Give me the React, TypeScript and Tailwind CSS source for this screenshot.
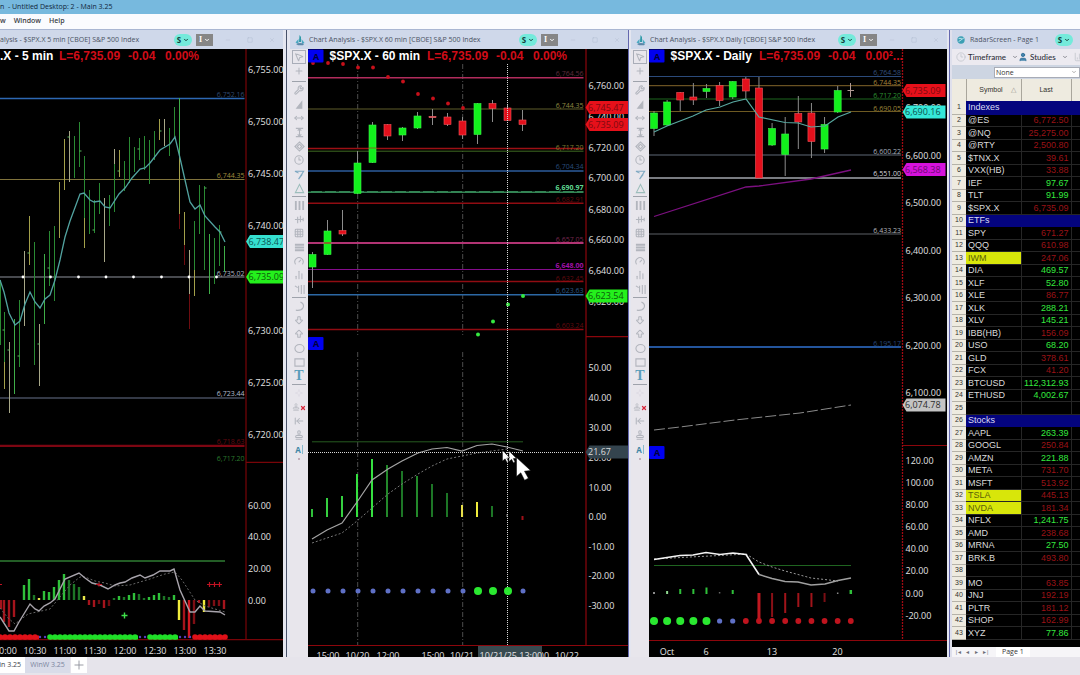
import React from "react";
import {
  MousePointer2, Plus, Wrench, Triangle, MoveHorizontal, Layers, Clock3, PenLine, AlignJustify,
  Grid3x3, Menu, Gauge, BarChart3, Circle, Square, Type, Sparkle, ArrowLeftToLine, Stamp,
  Minus, X, ChevronDown, TextCursor, Redo, ArrowBigDown, ArrowBigUp, User, Activity, TriangleRight, ChartNoAxesColumn, MoveVertical,
} from "lucide-react";

type Pt = [number, number];
type Level = { y: number; color: string; w?: number; label?: string; ly?: number; lc?: string; bold?: boolean; dash?: string };
type Candle = { x: number; top: number; bottom: number; hi: number; lo: number; up: boolean };
type Bar = [number, number, number, string];

const GREEN = "#12f01c";
const RED = "#e3101c";
const BLUE = "#5f70c6";
const poly = (pts: Pt[]) => pts.map((p) => p.join(",")).join(" ");

function AxisText({ x, labels }: { x: number; labels: [string, number][] }) {
  return (
    <g className="fill-[#e2e2e2] text-[9px]">
      {labels.map(([t, y]) => (
        <text key={t + y} x={x} y={y + 3}>{t}</text>
      ))}
    </g>
  );
}

function TimeText({ y, labels }: { y: number; labels: [string, number][] }) {
  return (
    <g className="fill-[#e2e2e2] text-[9px]" textAnchor="middle">
      {labels.map(([t, x]) => (
        <text key={t + x} x={x} y={y}>{t}</text>
      ))}
    </g>
  );
}

function Levels({ x1, x2, items }: { x1: number; x2: number; items: Level[] }) {
  return (
    <g className="text-[7px]" textAnchor="end">
      {items.map((l) => (
        <g key={l.y}>
          <line x1={x1} x2={x2} y1={l.y} y2={l.y} stroke={l.color} strokeWidth={l.w ?? 1} strokeDasharray={l.dash} />
          {l.label && (
            <text x={x2} y={l.ly} fill={l.lc ?? l.color} fontWeight={l.bold ? 700 : 400}>{l.label}</text>
          )}
        </g>
      ))}
    </g>
  );
}

function Tag({ x, y, w, fill, color, text }: { x: number; y: number; w: number; fill: string; color: string; text: string }) {
  return (
    <g>
      <path d={`M${x} ${y} l4 -6.5 h${w - 4} v13 h${4 - w} z`} fill={fill} />
      <text x={x + 2.5} y={y + 3} fill={color} className="text-[9px]">{text}</text>
    </g>
  );
}

function Candles({ items }: { items: Candle[] }) {
  return (
    <g>
      {items.map((c) => (
        <g key={c.x}>
          <line x1={c.x} x2={c.x} y1={c.hi} y2={c.lo} stroke="#8c8c8c" />
          <rect x={c.x - 3.5} y={c.top} width={7} height={c.bottom - c.top} fill={c.up ? GREEN : RED} stroke={c.up ? "#3cf04a" : "#f0555c"} strokeWidth={0.6} />
        </g>
      ))}
    </g>
  );
}

function Bars({ items, w = 1 }: { items: Bar[]; w?: number }) {
  return (
    <g>
      {items.map(([x, a, b, c], i) => (
        <line key={i} x1={x} x2={x} y1={a} y2={b} stroke={c} strokeWidth={w} />
      ))}
    </g>
  );
}

function ABadge({ x, y }: { x: number; y: number }) {
  return (
    <g>
      <rect x={x} y={y} width={15.5} height={13} rx={1} fill="#0000f0" />
      <text x={x + 8} y={y + 10} textAnchor="middle" className="fill-[#00003c] font-bold text-[9px]">A</text>
    </g>
  );
}

function Heading({ x, name, l, chg, pct }: { x: [number, number, number, number]; name: string; l: string; chg: string; pct: string }) {
  return (
    <g className="font-['Liberation_Sans',sans-serif] text-[12px] font-bold">
      <text x={x[0]} y={60} fill="#ffffff">{name}</text>
      <g fill="#d00c18">
        <text x={x[1]} y={60}>{l}</text>
        <text x={x[2]} y={60}>{chg}</text>
        <text x={x[3]} y={60}>{pct}</text>
      </g>
    </g>
  );
}

const G = "#2a8a33";
const YL = "#a3a04a";
const WY = "#a8a888";
const DR = "#6e0c10";

const priceBars: Bar[] = [
  [0.5, 280, 345, G], [4.5, 312, 362, G], [4.5, 362, 389, YL], [9.5, 342, 413, WY], [14.5, 319, 394, "#3fae48"], [19.5, 300, 367, G],
  [24.5, 251, 326, WY], [29.5, 216, 265, YL], [34.5, 242, 365, G], [39.5, 324, 386, WY], [44.5, 254, 324, "#3fae48"],
  [49.5, 231, 286, G], [54.5, 226, 301, G], [59.5, 182, 238, YL], [64.5, 139, 190, YL], [69.5, 131, 182, WY],
  [74.5, 136, 178, G], [79.5, 122, 167, G], [84.5, 156, 218, G], [84.5, 218, 248, YL], [89.5, 190, 234, G], [94.5, 200, 233, G],
  [99.5, 183, 214, G], [104.5, 198, 262, WY], [109.5, 195, 226, G], [114.5, 149, 212, G], [114.5, 149, 164, WY], [119.5, 150, 177, YL],
  [124.5, 161, 191, G], [129.5, 137, 183, G], [134.5, 147, 172, G], [139.5, 138, 160, G], [144.5, 136, 170, G], [149.5, 140, 184, G],
  [154.5, 131, 160, G], [159.5, 119, 140, YL], [164.5, 119, 146, WY], [169.5, 128, 156, G], [174.5, 107, 138, G], [179.5, 98, 155, "#3fae48"],
  [179.5, 155, 214, YL], [179.5, 214, 229, DR], [184.5, 212, 247, YL], [184.5, 245, 265, DR], [189.5, 250, 294, WY], [189.5, 294, 329, DR],
  [194.5, 221, 296, YL], [194.5, 221, 270, G], [199.5, 185, 234, G], [204.5, 186, 270, G], [209.5, 234, 294, "#3fae48"], [214.5, 238, 284, G],
  [219.5, 225, 266, G], [224.5, 246, 272, "#3fae48"],
];

const HG = "#2fc03a";
const HD = "#1d7626";
const HR = "#a5141c";
const hist5: Bar[] = (
  [
    [1, 609, HR], [4, 622, HR], [9, 627, HR], [14, 617, HR], [24, 585, HG], [29, 579, HG], [34, 595, HD], [39, 598, "#e8e84a"], [44, 591, HG],
    [49, 592, HG], [54, 587, HG], [59, 580, HG], [64, 574, HG], [69, 580, HD], [74, 584, HD], [79, 587, HD], [84, 596, "#e8e84a"], [89, 605, HR],
    [94, 607, HR], [99, 604, "#6e0c10"], [104, 608, HR], [109, 606, "#6e0c10"], [114, 598, HD], [119, 596, HG], [124, 597, HD], [129, 595, HG],
    [134, 593, HG], [139, 594, HD], [144, 598, HD], [149, 597, HG], [154, 595, HG], [159, 593, HG], [164, 596, HD], [169, 597, HD],
    [174, 595, HG], [179, 620, "#f0ec3c"], [184, 630, HR], [189, 638, "#d01820"], [194, 624, "#7e0e14"], [199, 603, HR], [204, 612, "#f0ec3c"],
    [209, 607, "#7e0e14"], [214, 606, "#7e0e14"], [219, 606, "#7e0e14"], [224, 609, HR],
  ] as [number, number, string][]
).map(([x, y, c]) => [x, 600, y, c]);

const ribbon = Array.from({ length: 46 }, (_, i) => {
  const x = i * 5;
  const purple = (x > 38 && x < 48) || (x > 139 && x < 149) || (x > 179 && x < 194);
  const green = (x >= 48 && x <= 139) || (x >= 149 && x <= 179);
  return { x, r: purple ? 1.2 : 2.8, c: purple ? "#5b3fc0" : green ? "#1fe028" : "#e01018" };
});

function FiveMinuteChart() {
  return (
    <svg viewBox="0 49 283 608" role="img" aria-label="5 minute chart" className="block h-auto w-full bg-black font-['Open_Sans',sans-serif]">
      <Levels x1={0} x2={244.5} items={[
        { y: 98.5, color: "#2d68b2", w: 1.6, label: "6,752.16", ly: 97, lc: "#31486e" },
        { y: 179.5, color: "#80733c", label: "6,744.35", ly: 178, lc: "#a08c3e" },
        { y: 277, color: "#8e929c", w: 1.2, label: "6,735.02", ly: 276, lc: "#aeb2c0" },
        { y: 398, color: "#69738c", w: 1.2, label: "6,723.44", ly: 396, lc: "#b4bacc" },
        { y: 445.8, color: "#7c0612", w: 2.2, label: "6,718.63", ly: 444, lc: "#640810" },
      ]} />
      <text x={244.5} y={461} textAnchor="end" className="fill-[#2b7a2e] text-[7px]">6,717.20</text>
      <path d="M246 49V640 M246 462.3H283 M0 639.6H283" stroke="#780408" strokeWidth={1.2} fill="none" />
      <Bars items={priceBars} />
      <path d="M4.5 330h-2 M9.5 350h-2 M19.5 356h-2 M29.5 253h-2 M39.5 344h-2 M49.5 268h-2 M79.5 151h2 M94.5 230h-2 M69.5 137h-2 M119.5 171h-2 M139.5 149h-2 M159.5 131h2 M204.5 188h2 M219.5 232h2" stroke="#57b85e" />
      <polyline fill="none" stroke="#52a3a0" strokeWidth={1.3} points={poly([
        [0, 280], [4, 292], [9, 313], [15, 325], [20, 321], [25, 304], [30, 292], [35, 302], [40, 308], [45, 299], [50, 295], [55, 280], [60, 260], [65, 237],
        [70, 221], [80, 194], [84, 193], [90, 200], [94, 202], [100, 201], [105, 207], [110, 208], [119, 194], [125, 188], [132, 178], [140, 169], [145, 168],
        [150, 163], [160, 150], [170, 144], [175, 137], [180, 158], [185, 180], [190, 202], [195, 209], [200, 205], [205, 216], [215, 227], [220, 232], [225, 242],
      ])} />
      {[23, 50.5, 78.5, 106, 133.5, 161.5, 189, 216.5].map((x) => <circle key={x} cx={x} cy={277} r={1.4} fill="#ffffff" />)}
      <line x1={0} x2={225} y1={561} y2={561} stroke="#2f7d33" strokeWidth={1.4} />
      <Bars items={hist5} w={2.4} />
      <polyline fill="none" stroke="#666" strokeDasharray="2 2" points={poly([
        [0, 608], [8, 618], [15, 624], [28, 614], [50, 609], [60, 597], [70, 585], [80, 577], [85, 577], [95, 581], [105, 583], [115, 586], [130, 585],
        [150, 579], [165, 574], [175, 572], [182, 580], [195, 600], [205, 606], [225, 612],
      ])} />
      <polyline fill="none" stroke="#a8a4ac" strokeWidth={1.4} points={poly([
        [0, 617], [9, 631], [14, 631], [19, 622], [30, 604], [35, 609], [39, 611], [44, 606], [50, 603], [55, 599], [65, 579], [79, 573], [85, 578], [92, 583],
        [100, 585], [108, 589], [115, 585], [120, 583], [125, 582], [132, 578], [140, 575], [145, 578], [153, 575], [160, 571], [170, 571], [174, 569],
        [180, 590], [190, 612], [195, 612], [200, 606], [205, 611], [220, 612], [225, 615],
      ])} />
      <path d="M0 584.5h2 M96 584.5h6 M99 582.5v4 M207 584.5h15 M209.5 582v5 M214.5 582v5 M219.5 582v5" stroke="#c01222" strokeWidth={1.2} />
      <path d="M121.5 615.5h6 M124.5 612.5v6" stroke="#3fe04a" strokeWidth={1.4} />
      {ribbon.map((d) => <circle key={d.x} cx={d.x} cy={637} r={d.r} fill={d.c} />)}
      <rect x={0} y={635.5} width={39} height={4} fill="#e01018" />
      <rect x={50} y={635.5} width={88} height={4} fill="#1fe028" />
      <rect x={151} y={635.5} width={27} height={4} fill="#1fe028" />
      <rect x={196} y={635.5} width={28} height={4} fill="#e01018" />
      <AxisText x={248} labels={[["6,755.00", 70], ["6,750.00", 122], ["6,745.00", 174], ["6,740.00", 226], ["6,730.00", 330.5], ["6,725.00", 382.5], ["6,720.00", 434.5], ["60.00", 505.5], ["40.00", 537], ["20.00", 568.5], ["0.00", 600.5]]} />
      <Tag x={246} y={241.5} w={37} fill="#35e0d0" color="#0c5450" text="6,738.47" />
      <Tag x={246} y={277} w={37} fill="#24f01c" color="#0c5a0a" text="6,735.09" />
      <TimeText y={654} labels={[["0:00", 8], ["10:30", 35], ["11:00", 65], ["11:30", 95], ["12:00", 125], ["12:30", 155], ["13:00", 185], ["13:30", 215]]} />
      <Heading x={[0, 59, 128, 165]} name=".X - 5 min" l="L=6,735.09" chg="-0.04" pct="0.00%" />
    </svg>
  );
}

const c60 = (i: number) => 312.5 + i * 15;
const candles60: Candle[] = (
  [
    [254.5, 267, 252, 288, 1], [231, 254.5, 220, 255, 1], [230.5, 234, 210, 236, 0], [163, 193.5, 151, 194, 1], [125, 162.5, 122, 163, 1], [124.5, 136, 124, 140, 0],
    [128, 135, 127, 141, 1], [116, 128, 112, 129, 1], [116.5, 117.5, 109, 125, 0], [117, 124.5, 113, 126, 0], [121, 135, 117, 139, 0], [103.5, 134.5, 103, 144, 1],
    [103.5, 108.5, 100, 122, 0], [108, 120.5, 104, 121, 0], [120, 124.5, 110, 131, 0],
  ] as number[][]
).map(([top, bottom, hi, lo, up], i) => ({ x: c60(i), top, bottom, hi, lo, up: up === 1 }));

function HourChart() {
  const hist: Bar[] = (
    [[509, HG], [498, "#35d040"], [496, "#35d040"], [474, "#35e040"], [459, "#35e040"], [465, "#23892b"], [471, HD], [476, "#23892b"], [484, HD], [493, HD], [505, "#e8e04a"], [502, "#f0ec3c"], [506, HD]] as [number, string][]
  ).map(([y, c], i) => [c60(i) - 0.5, 517, y, c]);
  return (
    <svg viewBox="308 49 320 608" role="img" aria-label="60 minute chart" className="block h-auto w-full bg-black font-['Open_Sans',sans-serif]">
      <path d="M357.7 64V335 M357.7 352V645 M462.7 64V335 M462.7 352V645" stroke="#4d4d4d" strokeDasharray="5 2 1 2" fill="none" />
      <Levels x1={308} x2={583.5} items={[
        { y: 77.7, color: "#b22c5c", w: 1.6, label: "6,764.56", ly: 76, lc: "#5e2c3c" },
        { y: 109, color: "#5f5c2a", label: "6,744.35", ly: 107.5, lc: "#8f8840" },
        { y: 148.5, color: "#9c1014", w: 1.4 },
        { y: 151.2, color: "#3f6a22", label: "6,717.20", ly: 149.5, lc: "#7a7a30" },
        { y: 171, color: "#2c5d9c", w: 1.6, label: "6,704.34", ly: 169, lc: "#284c7c" },
        { y: 192, color: "#45b070", w: 1.5, label: "6,690.97", ly: 190, lc: "#5fd890", bold: true },
        { y: 203.3, color: "#900c12", w: 1.6, label: "6,682.91", ly: 202, lc: "#600a0e" },
        { y: 243, color: "#b23474", w: 2, label: "6,657.05", ly: 242, lc: "#74264c" },
        { y: 269.5, color: "#850c8c", w: 1.2, label: "6,648.00", ly: 268, lc: "#a010a8", bold: true },
        { y: 281.5, color: "#900c12", w: 1.6, label: "6,632.45", ly: 281, lc: "#600a0e" },
        { y: 294.7, color: "#2c68a4", w: 1.6, label: "6,623.63", ly: 293, lc: "#2a5482" },
        { y: 329.5, color: "#900c12", w: 1.6, label: "6,603.24", ly: 328, lc: "#600a0e" },
      ]} />
      <line x1={308} x2={583} y1={191} y2={191} stroke="#000" strokeDasharray="3 11" />
      <path d="M586 49V645 M586 336.7H628 M308 645.5H628" stroke="#8c060c" strokeWidth={1.2} fill="none" />
      {[63, 63, 64, 67.5, 67.5, 77, 81.5, 94, 98.5, 103.5, 108].map((y, i) => <circle key={i} cx={c60(i) + 0.5} cy={y} r={1.9} fill="#c8101a" />)}
      <Candles items={candles60} />
      <path d="M324 243H331" stroke="#b23434" strokeWidth={1.4} />
      <path d="M369 148H376" stroke="#7a6a20" strokeWidth={1} />
      <path d="M429 117H436" stroke="#d07078" strokeWidth={1} />
      {([[478, 334.5], [493, 321.5], [508, 304.5], [523, 296]] as Pt[]).map(([x, y]) => <circle key={x} cx={x} cy={y} r={2} fill="#35e840" />)}
      <line x1={312} x2={523} y1={441.8} y2={441.8} stroke="#265a20" />
      <Bars items={hist} w={2} />
      <path d="M507 514v3" stroke="#777" />
      <path d="M522.5 516v4" stroke="#a01018" strokeWidth={2} />
      <polyline fill="none" stroke="#777" strokeDasharray="2 2" points={poly([[312, 543], [342, 533], [357, 521], [372, 508], [388, 494], [402, 484], [418, 474], [432, 466], [447, 459], [462, 456], [477, 453], [492, 451], [507, 449]])} />
      <polyline fill="none" stroke="#a4a4a4" strokeWidth={1.2} points={poly([[312, 539], [327, 530], [342, 523], [357, 502], [372, 480], [388, 469], [402, 461], [418, 453], [432, 449], [447, 447.5], [462, 451], [477, 445.5], [492, 444], [507, 447], [523, 451]])} />
      <path d="M507.5 64V645 M308 452.5H584" stroke="#d8d8d8" strokeDasharray="1 1" fill="none" />
      {Array.from({ length: 15 }, (_, i) => {
        const big = i >= 11 && i <= 13;
        return <circle key={i} cx={c60(i) + 0.5} cy={591} r={big ? 4 : 2.5} fill={big ? "#2ae830" : BLUE} />;
      })}
      <AxisText x={588.5} labels={[["6,760.00", 85.5], ["6,740.00", 116.5], ["6,720.00", 147.5], ["6,700.00", 178], ["6,680.00", 209.5], ["6,660.00", 240], ["6,640.00", 270.5], ["6,620.00", 302], ["50.00", 368], ["40.00", 398], ["30.00", 427.5], ["20.00", 458], ["10.00", 487.5], ["0.00", 517], ["-10.00", 546.5], ["-20.00", 576], ["-30.00", 606]]} />
      <Tag x={585.5} y={107.5} w={43} fill="#e6101a" color="#7c0a10" text="6,745.47" />
      <Tag x={585.5} y={124.5} w={43} fill="#e6101a" color="#7c0a10" text="6,735.09" />
      <Tag x={585.5} y={296} w={42} fill="#24f01c" color="#0c5a0a" text="6,623.54" />
      <Tag x={585.5} y={452} w={43} fill="#34444e" color="#dcdcdc" text="21.67" />
      <TimeText y={659} labels={[["15:00", 328], ["10/20", 357.5], ["12:00", 388], ["15:00", 433], ["10/21", 462], ["00", 544], ["10/22", 567]]} />
      <rect x={478} y={646} width={64} height={12} fill="#384a50" />
      <text x={479.5} y={659} className="fill-[#e4e4e4] text-[9px]">10/21/25 13:00</text>
      <ABadge x={308} y={49.5} />
      <ABadge x={308} y={337} />
      <path d="M502.5 450.5v10.5l2.6-2.2 1.8 3.5 1.6-.8-1.7-3.4 3-.4z M509 451v10.5l2.6-2.2 1.8 3.5 1.6-.8-1.7-3.4 3-.4z" fill="#fff" stroke="#000" strokeWidth={0.4} />
      <path d="M516.5 457.5v19l4.3-3.7 3.8 7.4 3.8-2-3.9-7 6.1-.7z" fill="#fff" stroke="#000" strokeWidth={0.5} />
      <Heading x={[329.5, 427, 496, 533]} name="$SPX.X - 60 min" l="L=6,735.09" chg="-0.04" pct="0.00%" />
    </svg>
  );
}

const dayX = (i: number) => 654 + i * 13.12;
const candlesDay: Candle[] = (
  [
    [113, 128.5, 111, 136, 1], [102, 125, 100, 126, 1], [92.5, 100, 92, 111, 0], [97, 100, 83, 105, 0], [88.5, 91.5, 84, 98, 1], [85.5, 100.5, 82, 106, 0],
    [81.5, 97, 81, 99, 1], [79, 91, 77, 98, 0], [88, 178, 77, 178, 0], [128.5, 145, 123, 146, 1], [134, 154.5, 117, 176, 1], [113.5, 122, 96, 149, 0],
    [113, 141.5, 103, 158, 0], [124.5, 149, 117, 153, 1], [90.5, 112, 86, 113, 1],
  ] as number[][]
).map(([top, bottom, hi, lo, up], i) => ({ x: dayX(i), top, bottom, hi, lo, up: up === 1 }));

function DailyChart() {
  const hist: [number, number, number, string, number][] = [
    [0, 592, 594, "#bbb", 1.5], [1, 591, 594, "#8fd890", 2], [2, 589, 594, HG, 2], [3, 589, 594, HG, 2], [4, 587.5, 594, HG, 2], [5, 592, 593.5, "#666", 1.5],
    [6, 590, 594, HG, 2], [8, 593, 620, "#c01820", 3], [9, 593, 617, "#8a1016", 2], [10, 593, 613, "#a0141a", 2], [11, 593, 607, "#a0141a", 2],
    [12, 593, 607, "#a0141a", 2], [13, 593, 602, "#7a0e14", 2], [14, 592.5, 594, "#888", 1.5], [15, 590, 594, HG, 2.5],
  ];
  return (
    <svg viewBox="649 49 298 608" role="img" aria-label="Daily chart" className="block h-auto w-full bg-black font-['Open_Sans',sans-serif]">
      <Levels x1={649} x2={901} items={[
        { y: 76.5, color: "#2b4a7a", label: "6,764.58", ly: 75, lc: "#35507c" },
        { y: 85.7, color: "#83652a", label: "6,744.35", ly: 84.5, lc: "#a5853a" },
        { y: 99, color: "#1d661f", label: "6,717.20", ly: 98, lc: "#2c9030" },
        { y: 111.5, color: "#6e5a22", label: "6,690.05", ly: 110.5, lc: "#9c8438" },
        { y: 155, color: "#5f6876", w: 1.2, label: "6,600.22", ly: 153.5, lc: "#a9afbe" },
        { y: 178, color: "#a2a6ac", w: 1.3, label: "6,551.00", ly: 176, lc: "#d4d6dc" },
        { y: 234, color: "#5c6066", w: 1.2, label: "6,433.23", ly: 232.5, lc: "#b4b6ba" },
        { y: 347, color: "#24559c", w: 2, label: "6,195.17", ly: 345.5, lc: "#274678" },
      ]} />
      <path d="M902.5 49V641" stroke="#a00a12" strokeWidth={1.3} strokeDasharray="2 1" />
      <path d="M902.5 445.5H947 M649 640.5H947" stroke="#8c060c" strokeWidth={1.2} />
      <Candles items={candlesDay} />
      <path d="M850.5 83V97 M847.5 90.5H854" stroke="#b09a94" />
      <polyline fill="none" stroke="#58a8a0" strokeWidth={1.2} points={poly([[654, 132], [667, 126], [693, 116], [706, 110], [720, 107], [733, 102], [746, 99], [759, 117], [785, 122.5], [798, 123], [811, 127], [825, 126], [838, 117], [851, 112]])} />
      <polyline fill="none" stroke="#7c1080" strokeWidth={1.3} points={poly([[654, 216.5], [746, 187], [759, 186], [811, 179], [851, 170]])} />
      <polyline fill="none" stroke="#8a8a8a" strokeDasharray="11 3" points={poly([[654, 430], [680, 427], [735, 420], [800, 413], [851, 405]])} />
      <line x1={654} x2={851} y1={565.5} y2={565.5} stroke="#1f6420" strokeWidth={1.2} />
      {hist.map(([i, a, b, c, w]) => <line key={i} x1={dayX(i)} x2={dayX(i)} y1={a} y2={b} stroke={c} strokeWidth={w} />)}
      <polyline fill="none" stroke="#999" strokeDasharray="2 2" points={poly([[654, 559], [690, 557], [720, 555.5], [746, 554], [759, 562], [772, 567], [785, 571], [811, 578], [838, 581]])} />
      <polyline fill="none" stroke="#f4f4f4" strokeWidth={1.6} points={poly([[654, 559.5], [667, 557.5], [680, 555.5], [693, 555], [706, 552.5], [720, 554.5], [733, 553], [746, 554.5], [759, 574.5]])} />
      <polyline fill="none" stroke="#a0a0a0" strokeWidth={1.5} points={poly([[759, 574.5], [772, 578.5], [785, 581.5], [798, 582], [811, 585], [825, 584], [838, 580.5], [851, 578]])} />
      {Array.from({ length: 16 }, (_, i) => (
        <circle key={i} cx={dayX(i)} cy={621} r={i < 5 ? 4 : i < 7 ? 2.6 : 2.9} fill={i < 5 ? "#2ae830" : i < 7 ? BLUE : "#bf141e"} />
      ))}
      <AxisText x={905.5} labels={[["6,700.00", 107.5], ["6,600.00", 155.5], ["6,500.00", 203], ["6,400.00", 250.5], ["6,300.00", 298], ["6,200.00", 345.5], ["6,100.00", 393], ["120.00", 461], ["100.00", 483], ["80.00", 505], ["60.00", 527], ["40.00", 549], ["20.00", 571], ["0.00", 593.5], ["-20.00", 615.5]]} />
      <Tag x={902.5} y={90.5} w={43} fill="#e6101a" color="#7c0a10" text="6,735.09" />
      <Tag x={902.5} y={112} w={43} fill="#35e8d8" color="#0c5450" text="6,690.16" />
      <Tag x={902.5} y={169.5} w={43} fill="#d512dc" color="#6c0a72" text="6,568.38" />
      <Tag x={902.5} y={405} w={43} fill="#c4c4c4" color="#2c2c2c" text="6,074.78" />
      <TimeText y={655} labels={[["Oct", 667], ["6", 706], ["13", 772], ["20", 837.5]]} />
      <ABadge x={649} y={49.5} />
      <ABadge x={649} y={446} />
      <Heading x={[670.5, 759, 828, 865.5]} name="$SPX.X - Daily" l="L=6,735.09" chg="-0.04" pct="0.00²..." />
    </svg>
  );
}

function LogoMark() {
  return (
    <svg viewBox="0 0 10 12" className="h-3 w-2.5 shrink-0" aria-hidden="true">
      <path d="M4.5 1L6 3v5H4z" fill="#2e9aa8" />
      <path d="M0.5 8.5L3.5 5v5z M6.5 5l3 4-2.5 1z" fill="#48a8c0" />
      <path d="M1 10q4-2 8 0l-1 1.2H3z" fill="#5b87a8" />
    </svg>
  );
}

function LinkButtons({ both = true }: { both?: boolean }) {
  return (
    <div className="flex shrink-0 items-center gap-1">
      <button aria-label="Symbol link" className="flex h-3 w-[18px] items-center justify-center gap-0.5 rounded-md bg-[#74eadb] text-[8px] font-bold text-[#14403c]">
        S<ChevronDown className="size-1.5" strokeWidth={4} />
      </button>
      {both && (
        <button aria-label="Interval link" className="flex h-3 w-[17px] items-center justify-center gap-0.5 bg-[#868686] font-['Liberation_Serif',serif] text-[8px] font-bold text-white">
          I<ChevronDown className="size-1.5" strokeWidth={4} />
        </button>
      )}
    </div>
  );
}

function WindowBar({ title, logo = true }: { title: string; logo?: boolean }) {
  return (
    <header className="flex h-[19px] items-center bg-[#cfd8ea] pr-2">
      {logo && <span className="flex w-[19px] shrink-0 justify-center"><LogoMark /></span>}
      <h2 className="grow overflow-hidden pt-0.5 text-[7px] font-medium whitespace-nowrap text-[#4a5262]">{title}</h2>
      <LinkButtons />
      <div className="flex shrink-0 items-center gap-4 pl-3 text-[#b4bed2]">
        <button aria-label="Minimize"><Minus className="size-1.5" /></button>
        <button aria-label="Maximize"><Square className="size-1.5" /></button>
        <button aria-label="Close"><X className="size-1.5" /></button>
      </div>
    </header>
  );
}

const toolGroups = [
  [["Pointer", MousePointer2], ["Crosshair", Plus]],
  [["Tools", Wrench], ["Angle", TriangleRight], ["Horizontal", MoveHorizontal], ["Vertical", MoveVertical], ["Levels", Layers], ["Cycle", Clock3], ["Trend line", PenLine], ["Triangle", Triangle]],
  [["Columns", AlignJustify], ["Pitchfork", Activity], ["Grid", Grid3x3], ["Bands", Menu], ["Gauge", Gauge], ["Bars", ChartNoAxesColumn], ["Volume", BarChart3]],
  [["Arc", Redo], ["Arrow down", ArrowBigDown], ["Arrow up", ArrowBigUp], ["Ellipse", Circle], ["Rectangle", Square], ["Text", Type]],
  [["Sparkle", Sparkle], ["Delete drawing", Stamp], ["Snap", ArrowLeftToLine], ["Edit", Stamp], ["Label", TextCursor]],
] as const;

const drawnTools: Record<string, React.ReactNode> = {
  Angle: <path d="M8.5 3v7H3z" fill="currentColor" />,
  Vertical: <path d="M2 1.5h8M2 10.5h8M6 2v8M4 4l2-2 2 2M4 8l2 2 2-2" />,
  Levels: <path d="M6 1l5 5-5 5-5-5zM3.5 6L6 3.5 8.5 6 6 8.5z" />,
  "Trend line": <path d="M1 2.5h9.5L5 11M1 2.5l4 2M5 11l4-5" stroke="#7fa9c2" />,
  Triangle: <path d="M6 1.5L10.5 10.5H1.5z" stroke="#9cbdbb" />,
  Columns: <path d="M2 1v10M6 1v10M10 1v10" strokeWidth="2" />,
  Pitchfork: <path d="M1 6h3M4 3v7M4 6h6M7 2v7M10 4v4" />,
  Bands: <path d="M1 3h10M1 6h10M1 9h10" strokeWidth="2" />,
  Volume: <path d="M1 2l3 2M5 2v7M8 1v10M11 1v10" />,
  Arc: <path d="M7 1q4.5 2 3 6q-2 4-8 3" />,
  Ellipse: <ellipse cx="6" cy="6" rx="5" ry="4.4" />,
  Rectangle: <path d="M1 2h10v8H1z" />,
};

function ToolColumn() {
  return (
    <nav aria-label="Drawing tools" className="flex w-[18px] shrink-0 flex-col items-center bg-[#e8e6ec] pt-px text-[#b2b5bd]">
      {toolGroups.map((group, g) => (
        <React.Fragment key={g}>
          {g > 0 && <hr className="my-px h-px w-3.5 border-0 bg-[#9ea2ab]" />}
          <div className={g === 0 ? "pb-0.5" : ""}>
            {group.map(([name, Icon]) => (
              <button
                key={name}
                aria-label={name}
                className={`flex h-3.5 w-3.5 items-center justify-center ${name === "Pointer" ? "border border-[#a9adb8]" : ""}`}
              >
                {drawnTools[name] ? (
                  <svg viewBox="0 0 12 12" className="size-[11px]" fill="none" stroke="currentColor" strokeWidth="1.2">{drawnTools[name]}</svg>
                ) : name === "Text" ? (
                  <span aria-hidden="true" className="font-['Liberation_Serif',serif] text-[14px] leading-none font-bold text-[#5a9dbb]">T</span>
                ) : name === "Label" ? (
                  <span aria-hidden="true" className="border-r border-[#8ab9cc] pr-px text-[8px] leading-[9px] font-bold text-[#3e86a5]">A</span>
                ) : name === "Delete drawing" ? (
                  <span className="flex items-end"><Icon className="size-2" /><X className="size-1.5 text-[#d8283c]" strokeWidth={5} /></span>
                ) : name === "Sparkle" ? (
                  <Icon className="size-2 text-[#dcdae2]" />
                ) : (
                  <Icon className="size-2.5" strokeWidth={2.5} />
                )}
              </button>
            ))}
          </div>
        </React.Fragment>
      ))}
      <span className="mt-0.5 size-0.5 rounded-full bg-[#b59aa8]" />
    </nav>
  );
}

const rows: [string, string?, boolean?][] = [
  ["Indexes"], ["@ES", "6,772.50"], ["@NQ", "25,275.00"], ["@RTY", "2,500.80"], ["$TNX.X", "39.61"], ["VXX(HB)", "33.88"], ["IEF", "97.67", true],
  ["TLT", "91.99", true], ["$SPX.X", "6,735.09"], ["ETFs"], ["SPY", "671.27"], ["QQQ", "610.98"], ["IWM", "247.06"], ["DIA", "469.57", true],
  ["XLF", "52.80", true], ["XLE", "86.77"], ["XLK", "288.21", true], ["XLV", "145.21", true], ["IBB(HB)", "156.09"], ["USO", "68.20", true],
  ["GLD", "378.61"], ["FCX", "41.20"], ["BTCUSD", "112,312.93", true], ["ETHUSD", "4,002.67", true], [""], ["Stocks"], ["AAPL", "263.39", true],
  ["GOOGL", "250.84"], ["AMZN", "221.88", true], ["META", "731.70"], ["MSFT", "513.92"], ["TSLA", "445.13"], ["NVDA", "181.34"],
  ["NFLX", "1,241.75", true], ["AMD", "238.68"], ["MRNA", "27.50", true], ["BRK.B", "493.80"], [""], ["MO", "63.85"], ["JNJ", "192.19"],
  ["PLTR", "181.12"], ["SHOP", "162.99"], ["XYZ", "77.86", true],
];
const headings = ["Indexes", "ETFs", "Stocks"];
const marked = ["IWM", "TSLA", "NVDA"];

function RadarScreen() {
  return (
    <section className="flex min-w-0 flex-col border-l-2 border-[#dfe0ec] bg-black">
      <header className="flex h-[19px] shrink-0 items-center bg-[#cfd8ea]">
        <span className="flex w-[18px] shrink-0 justify-center">
          <svg viewBox="0 0 10 10" className="size-2" aria-hidden="true"><circle cx="5" cy="5" r="4.6" fill="#3b9fb4" /><path d="M5 5L9 2M5 5l-3 2M2 3h4" stroke="#bfe6ee" strokeWidth="1.2" /></svg>
        </span>
        <h2 className="w-[85px] shrink-0 pt-0.5 text-[7px] font-medium whitespace-nowrap text-[#4a5262]">RadarScreen - Page 1</h2>
        <LinkButtons both={false} />
      </header>
      <div className="flex h-4 shrink-0 items-center overflow-hidden bg-[#eceaf0] pl-1 font-['Lato',sans-serif] text-[8px] font-medium whitespace-nowrap text-[#2c2f38]">
        <Clock3 className="mr-0.5 size-2.5 shrink-0 text-[#c4c6ce]" />
        <button className="flex w-[50px] shrink-0 items-center justify-between">Timeframe<ChevronDown className="size-1.5" /></button>
        <User className="mr-0.5 size-2.5 shrink-0 fill-[#4585ad] text-[#2d6c96]" />
        <button className="flex w-[38px] shrink-0 items-center justify-between">Studies<ChevronDown className="size-1.5" /></button>
        <BarChart3 className="ml-1.5 size-2.5 shrink-0 text-[#c4c6ce]" />
      </div>
      <div className="flex h-[14px] shrink-0 items-center bg-[#cdd5e2] pl-[42px]">
        <div className="flex h-[11px] w-full items-center border border-[#a8acb6] bg-white pr-0.5">
          <select aria-label="Alert filter" className="h-[9px] w-full appearance-none bg-white p-0 pl-px text-[7px] leading-[9px] text-[#333]">
            <option>None</option>
          </select>
          <ChevronDown className="size-1.5 shrink-0 text-[#666]" />
        </div>
      </div>
      <table className="w-full table-fixed border-collapse font-['Liberation_Sans',sans-serif]">
        <colgroup>
          <col className="w-[14px]" /><col className="w-[55px]" /><col className="w-[50px]" /><col />
        </colgroup>
        <thead>
          <tr className="h-[22px] bg-[#eeebe0] text-[7px] text-[#33322e]">
            <td className="border-r border-[#a9a69c] p-0" />
            <th scope="col" className="border-r border-[#a9a69c] p-0 font-normal"><span className="flex items-center justify-center gap-2 pl-2">Symbol<span className="text-[#9a988f]">&#x25B3;</span></span></th>
            <th scope="col" className="border-r border-[#a9a69c] p-0 font-normal">Last</th>
            <td className="p-0" />
          </tr>
        </thead>
        <tbody>
          {rows.map(([sym, last, up], i) => {
            const head = headings.includes(sym);
            return (
              <tr key={i} className={`odd:h-[13px] even:h-3 ${head ? "bg-[#04047e]" : "bg-black"}`}>
                <th scope="row" className="border-b border-[#b5b2a8] bg-[#eeebe0] p-0 text-center text-[7px] leading-[10px] font-normal text-[#33322e]">{i + 1}</th>
                <td className={`overflow-hidden border-r border-b p-0 pl-0.5 text-[9px] leading-[10px] whitespace-nowrap ${head ? "border-[#04047e] text-[#dcdcf4]" : "border-[#262626]"} ${marked.includes(sym) ? "bg-[#d8e60a] text-[#5a6008]" : head ? "" : "text-[#dadada]"}`}>{sym}</td>
                <td className={`border-r border-b p-0 pr-0.5 text-right text-[9px] leading-[10px] ${head ? "border-[#04047e]" : "border-[#262626]"} ${up ? "text-[#34e83e]" : "text-[#9a1216]"}`}>{last}</td>
                <td className={`border-b p-0 ${head ? "border-[#04047e]" : "border-[#262626]"}`} />
              </tr>
            );
          })}
        </tbody>
      </table>
      <footer className="mt-auto flex h-2.5 shrink-0 items-center bg-[#f6f5f8] text-[7px] leading-[10px] text-[#333]">
        <div className="flex w-10 items-center justify-around text-[6px] text-[#6a6c74]">
          <button aria-label="First page">|◂</button><button aria-label="Previous page">◂</button><button aria-label="Next page">▸</button><button aria-label="Last page">▸|</button>
        </div>
        <button className="ml-1 bg-white px-1.5">Page 1</button>
      </footer>
    </section>
  );
}

export default function App() {
  return (
    <div className="flex min-h-screen flex-col overflow-hidden bg-[#e6e4eb] font-['Open_Sans',sans-serif]">
      <header className="flex h-3.5 items-center bg-[#77b9de] text-[7px] font-medium whitespace-pre text-[#10263a]">
        <h1>n  - Untitled Desktop: 2 - Main 3.25</h1>
      </header>
      <nav aria-label="Main menu" className="flex h-[15px] items-center gap-2 bg-[#fafbfe] text-[7px] font-semibold text-[#3b3e46]">
        <button>w</button>
        <button>Window</button>
        <button>Help</button>
      </nav>
      <main className="grid grid-cols-[287fr_341fr_322fr_130fr] border-t border-[#a9b6d2]">
        <section className="min-w-0 border-r border-[#48526a]">
          <div className="border-r-3 border-[#e4e6f0]">
            <WindowBar title="alysis - $SPX.X 5 min [CBOE] S&P 500 Index" logo={false} />
            <FiveMinuteChart />
          </div>
        </section>
        <section className="min-w-0 border-l-3 border-[#e4e6f0]">
          <WindowBar title="Chart Analysis - $SPX.X 60 min [CBOE] S&P 500 Index" />
          <div className="flex">
            <ToolColumn />
            <div className="min-w-0 grow"><HourChart /></div>
          </div>
        </section>
        <section className="min-w-0 border-x border-[#6468ae]">
          <div className="border-x-2 border-[#e4e6f0]">
            <WindowBar title="Chart Analysis - $SPX.X Daily [CBOE] S&P 500 Index" />
            <div className="flex">
              <ToolColumn />
              <div className="min-w-0 grow"><DailyChart /></div>
            </div>
          </div>
        </section>
        <RadarScreen />
      </main>
      <footer className="flex h-4 items-stretch text-[7px] whitespace-nowrap">
        <button className="flex w-[25px] items-center justify-end overflow-hidden bg-white pr-1 text-[#3c3f48]">ain 3.25</button>
        <button className="w-[45px] bg-[#d9dce9] text-[#7b86a0]">WinW 3.25</button>
        <button aria-label="Add desktop" className="ml-px flex w-4 items-center justify-center bg-white text-[#8c8f98]"><Plus className="size-3.5" strokeWidth={1.5} /></button>
      </footer>
    </div>
  );
}
